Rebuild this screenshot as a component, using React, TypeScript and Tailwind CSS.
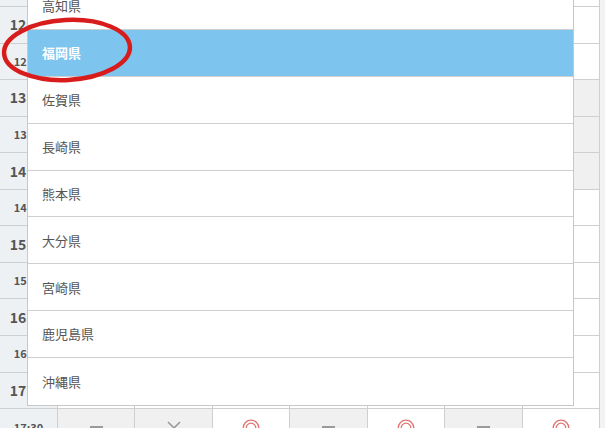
const times = [
  "11:30", "12:00", "12:30", "13:00", "13:30", "14:00", "14:30",
  "15:00", "15:30", "16:00", "16:30", "17:00", "17:30",
];

// "g" = gray cell, "w" = white cell
const lastCol = ["w", "w", "w", "g", "g", "g", "w", "w", "w", "w", "w", "w"];
const bottomRow: { bg: string; mark: "dash" | "x" | "circle" }[] = [
  { bg: "g", mark: "dash" },
  { bg: "g", mark: "x" },
  { bg: "w", mark: "circle" },
  { bg: "g", mark: "dash" },
  { bg: "w", mark: "circle" },
  { bg: "g", mark: "dash" },
  { bg: "w", mark: "circle" },
];

const prefs = ["高知県", "福岡県", "佐賀県", "長崎県", "熊本県", "大分県", "宮崎県", "鹿児島県", "沖縄県"];

const Mark = ({ mark }: { mark: "dash" | "x" | "circle" }) => {
  if (mark === "dash") return <span className="block w-[13px] h-[3px] bg-[#9a9a9a] mt-[17px]" />;
  if (mark === "x")
    return (
      <svg width="16" height="16" viewBox="0 0 16 16" className="mt-[11px]">
        <path d="M2 2 L14 14 M14 2 L2 14" stroke="#9a9a9a" strokeWidth="1.6" fill="none" />
      </svg>
    );
  return (
    <svg width="18" height="18" viewBox="0 0 18 18" className="mt-[10px]">
      <circle cx="9" cy="9" r="7.8" stroke="#e27272" strokeWidth="1.3" fill="none" />
      <circle cx="9" cy="9" r="4.8" stroke="#e27272" strokeWidth="1.3" fill="none" />
    </svg>
  );
};

export default function App() {
  return (
    <div className="relative w-[605px] h-[428px] overflow-hidden bg-[#f3f3f3] font-['Noto_Sans_CJK_JP','Noto_Sans',sans-serif]">
      <div className="w-[600px] mt-[-29.5px]">
        {times.map((t, i) => {
          const isLast = i === times.length - 1;
          const hour = t.endsWith(":00");
          return (
            <div key={t} className="grid grid-cols-[58px_repeat(7,1fr)] h-[36.55px] border-b border-[#cfcfcf]">
              <div className="flex items-center justify-center bg-[#eef1f4] border-r border-[#cfcfcf] text-[#555]">
                <span className={hour ? "text-[14px] font-bold" : "text-[11px] font-semibold"}>{t}</span>
              </div>
              {Array.from({ length: 7 }).map((_, c) => {
                let bg = "bg-white";
                let mark: "dash" | "x" | "circle" | null = null;
                if (isLast) {
                  bg = bottomRow[c].bg === "g" ? "bg-[#f0f0f0]" : "bg-white";
                  mark = bottomRow[c].mark;
                } else if (c === 6) {
                  bg = lastCol[i] === "g" ? "bg-[#f0f0f0]" : "bg-white";
                }
                return (
                  <div key={c} className={`flex justify-center border-r border-[#cfcfcf] ${bg}`}>
                    {mark && <Mark mark={mark} />}
                  </div>
                );
              })}
            </div>
          );
        })}
      </div>

      {/* dropdown list */}
      <div className="absolute left-[27px] top-0 w-[547px] h-[406px] overflow-hidden bg-white border-x border-b border-[#c8c8c8]">
        <div className="mt-[-17px]">
          {prefs.map((p) => {
            const sel = p === "福岡県";
            return (
              <div
                key={p}
                className={`flex items-center h-[46.9px] pl-[14px] text-[13px] border-b border-[#cfcfcf] last:border-b-0 ${
                  sel ? "bg-[#7dc4ee] text-white font-bold" : "text-[#555]"
                }`}
              >
                {p}
              </div>
            );
          })}
        </div>
      </div>

      {/* red ellipse highlight */}
      <svg className="absolute left-0 top-0" width="150" height="100" viewBox="0 0 150 100">
        <ellipse cx="67" cy="50" rx="63" ry="30" transform="rotate(-3 67 50)" fill="none" stroke="#d81c1c" strokeWidth="4.5" />
      </svg>
    </div>
  );
}
